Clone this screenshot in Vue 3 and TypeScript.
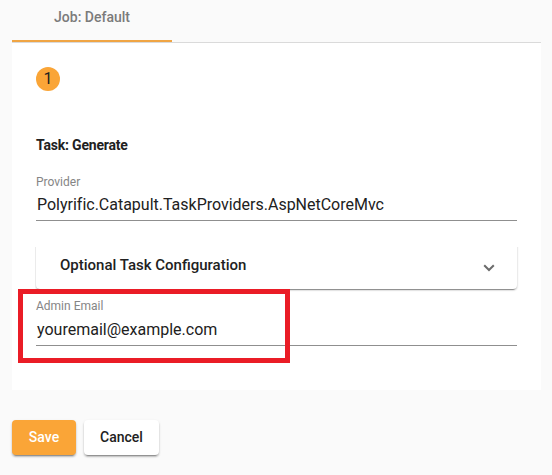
<script setup lang="ts">
import { ref } from 'vue'

const provider = ref('Polyrific.Catapult.TaskProviders.AspNetCoreMvc')
const adminEmail = ref('youremail@example.com')
</script>

<template>
  <main class="page">
    <nav class="tabs">
      <div class="tab">Job: Default</div>
    </nav>
    <section class="card">
      <div class="step">1</div>
      <h3 class="task">Task: Generate</h3>
      <div class="field">
        <span class="label">Provider</span>
        <span class="value provider">{{ provider }}</span>
      </div>
      <div class="panel">
        <span class="panel-title">Optional Task Configuration</span>
        <svg class="chevron" viewBox="0 0 12 8" width="12" height="8">
          <path d="M1.2 1.2 6 6 10.8 1.2" fill="none" stroke="#6c6c6c" stroke-width="2" />
        </svg>
      </div>
      <div class="field email">
        <span class="label">Admin Email</span>
        <span class="value">{{ adminEmail }}</span>
        <div class="highlight"></div>
      </div>
    </section>
    <div class="actions">
      <button class="btn primary">Save</button>
      <button class="btn">Cancel</button>
    </div>
  </main>
</template>

<style>
body {
  background: #fafafa;
}
</style>

<style scoped>
.page {
  box-sizing: border-box;
  height: 475px;
  padding: 0 11px 0 12px;
  overflow: hidden;
  color: #212121;
  font-family: Roboto, 'Liberation Sans', sans-serif;
}
.tabs {
  display: flex;
  height: 42px;
  border-bottom: 1px solid #dadada;
}
.tab {
  box-sizing: border-box;
  width: 160px;
  height: 42px;
  border-bottom: 2px solid #f0a544;
  color: #7b7b7b;
  font-size: 14px;
  font-weight: 500;
  line-height: 34px;
  text-align: center;
}
.card {
  box-sizing: border-box;
  height: 347px;
  padding: 24px 24px 0;
  background: #fff;
}
.step {
  width: 24px;
  height: 24px;
  border-radius: 50%;
  background: #faa537;
  font-size: 16px;
  line-height: 24px;
  text-align: center;
}
.task {
  margin: 44px 0 0;
  font-size: 14px;
  font-weight: 700;
  letter-spacing: -0.2px;
  line-height: 20px;
}
.field {
  position: relative;
  display: flex;
  flex-direction: column;
  box-sizing: border-box;
  height: 46px;
  margin-top: 20px;
  border-bottom: 1px solid #8f8f8f;
}
.label {
  color: #858585;
  font-size: 12px;
  line-height: 14px;
}
.value {
  margin-top: 6px;
  padding-left: 1px;
  font-size: 16px;
  line-height: 20px;
}
.provider {
  letter-spacing: -0.01px;
}
.panel {
  display: flex;
  align-items: center;
  justify-content: space-between;
  box-sizing: border-box;
  height: 48px;
  margin-top: 20px;
  padding: 0 22px 0 24px;
  border-radius: 4px;
  background: #fff;
  box-shadow: 0 3px 1px -2px rgba(0, 0, 0, 0.3), 0 1px 2px 0 rgba(0, 0, 0, 0.3);
  clip-path: inset(6px -4px -5px -1px);
}
.panel-title {
  font-size: 15px;
  font-weight: 500;
}
.chevron {
  margin-top: 6px;
}
.email {
  height: 47px;
  margin-top: 10px;
}
.email .value {
  margin-top: 7px;
}
.highlight {
  position: absolute;
  top: -10px;
  left: -18px;
  box-sizing: border-box;
  width: 272px;
  height: 74px;
  border: 5px solid #ea1c26;
}
.actions {
  display: flex;
  gap: 8px;
  margin-top: 30px;
}
.btn {
  min-width: 64px;
  height: 35px;
  padding: 0 16px;
  border: 0;
  border-radius: 4px;
  background: #fff;
  color: #212121;
  font-family: inherit;
  font-size: 14px;
  font-weight: 500;
  line-height: 35px;
  box-shadow: 0 3px 1px -2px rgba(0, 0, 0, 0.25), 0 2px 2px 0 rgba(0, 0, 0, 0.2), 0 1px 3px 0 rgba(0, 0, 0, 0.1);
}
.primary {
  background: #faa537;
  color: #fff;
}
</style>
